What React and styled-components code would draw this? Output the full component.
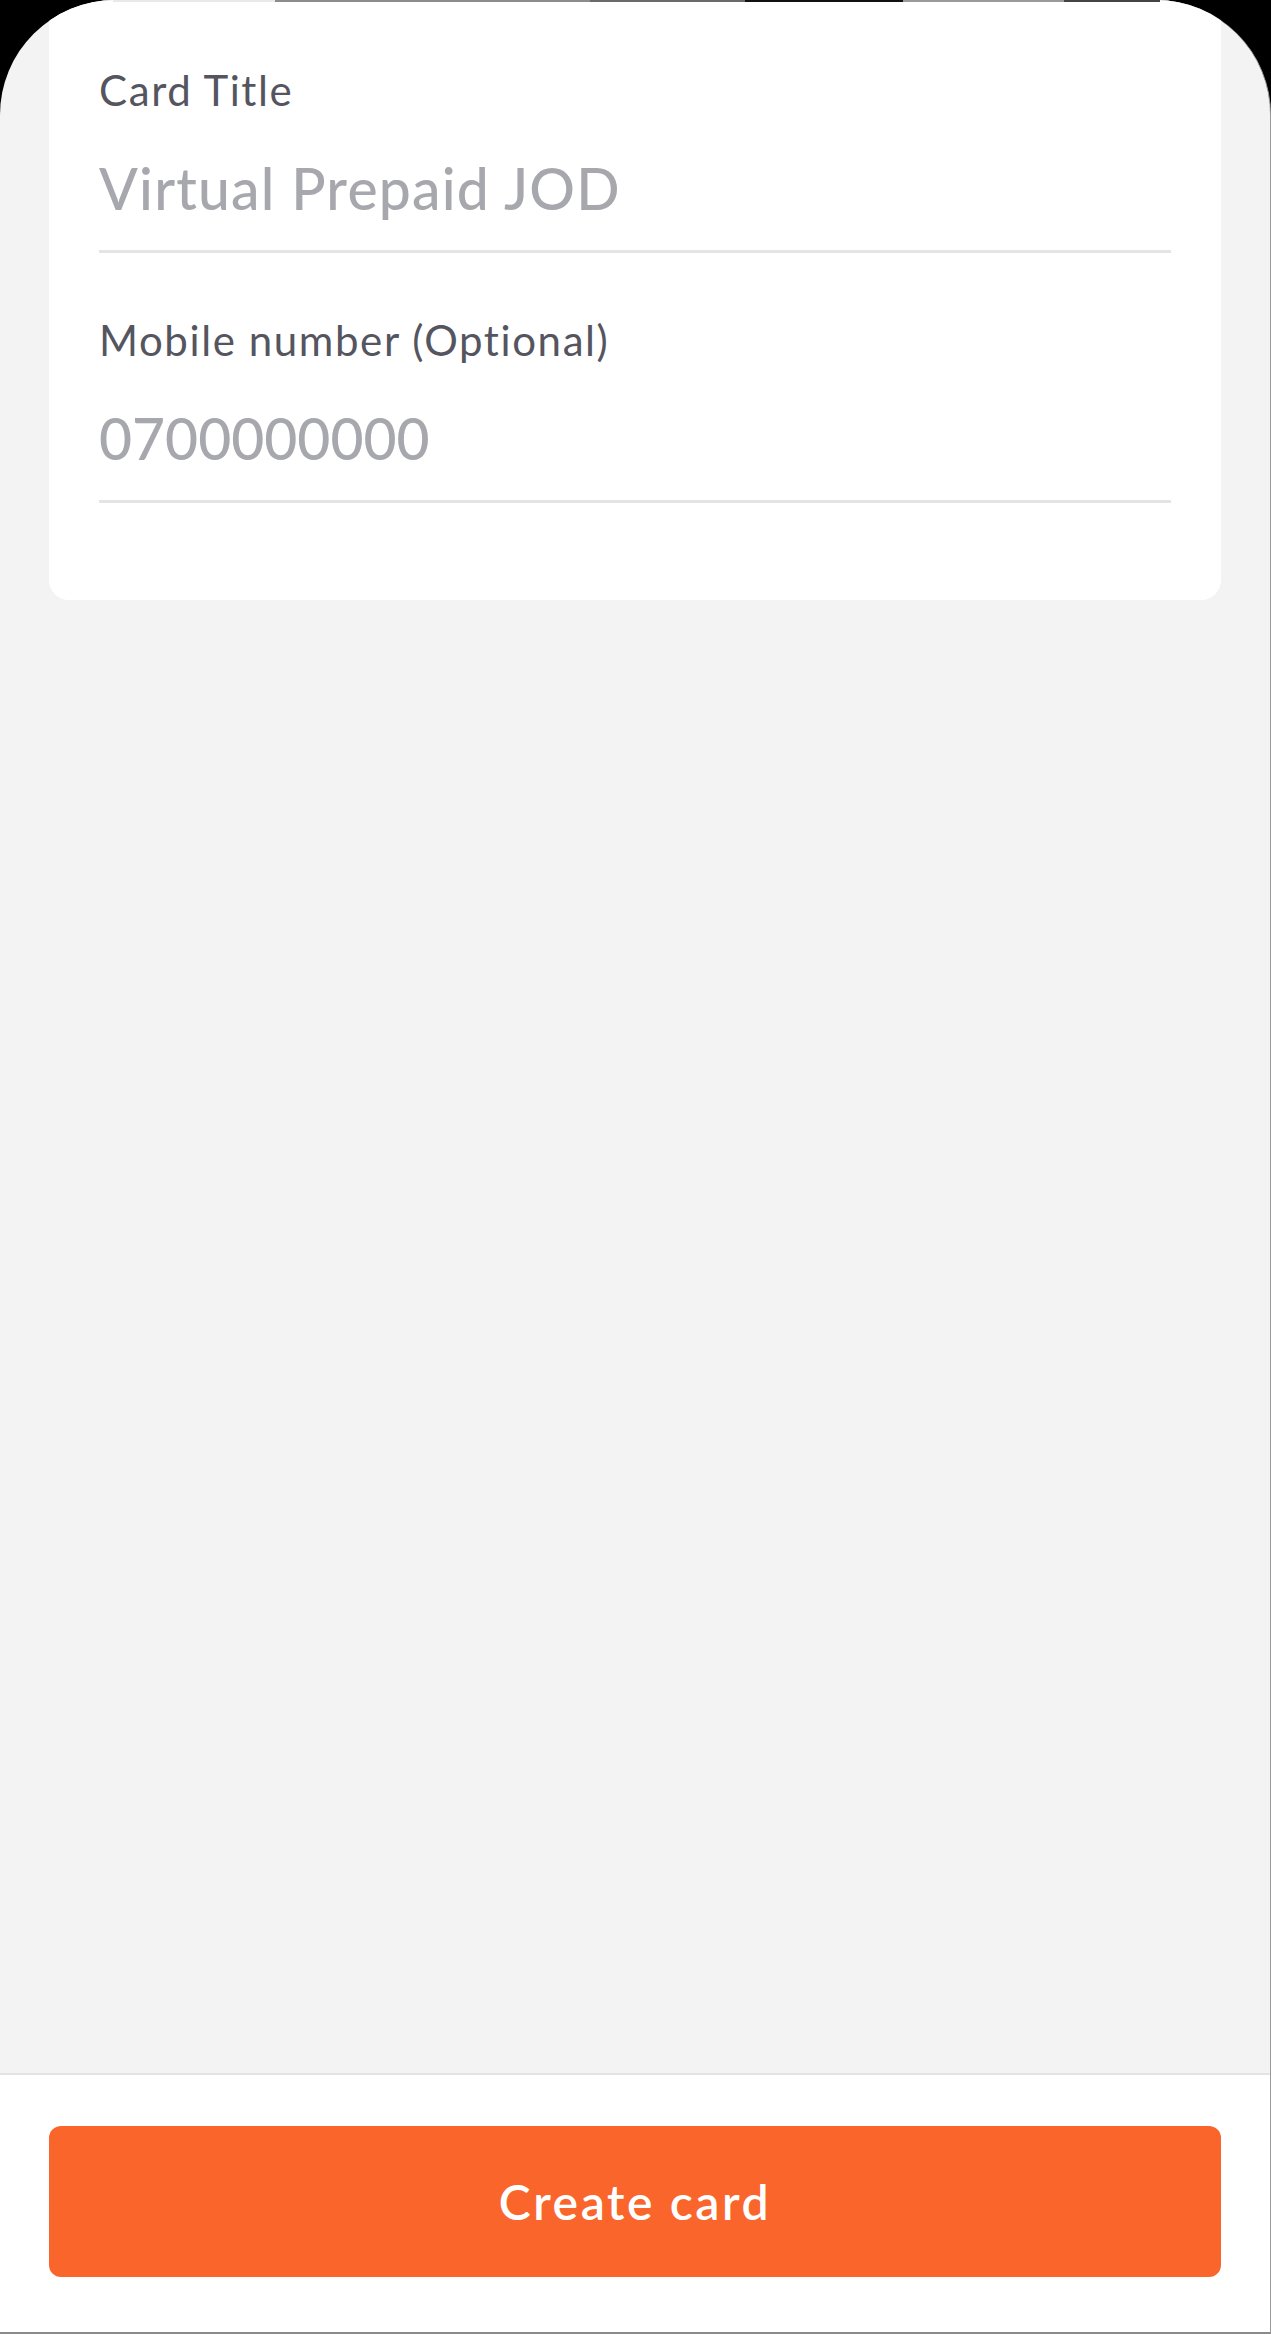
import React from 'react';
import styled, { createGlobalStyle } from 'styled-components';

const GlobalStyle = createGlobalStyle`
  html, body {
    margin: 0;
    padding: 0;
    background: #000;
  }
  * {
    box-sizing: border-box;
  }
`;

const Frame = styled.div`
  position: relative;
  width: 1271px;
  height: 2334px;
  background: #000;
  overflow: hidden;
`;

const Screen = styled.div`
  display: flex;
  flex-direction: column;
  width: 100%;
  height: 100%;
  background: #f3f3f3;
  border-radius: 115px 115px 0 0;
  border-right: 1px solid #9a9a9a;
  border-bottom: 2px solid #8a8a8a;
  overflow: hidden;
  font-family: Lato, 'Noto Sans', sans-serif;
  font-variant-ligatures: none;
`;

// thin strip of the device edge over the top of the screen
const TopEdge = styled.div`
  position: absolute;
  top: 0;
  left: 0;
  width: 100%;
  height: 2px;
  background: linear-gradient(
    to right,
    transparent 0 113px,
    #e9e9e9 113px 275px,
    #8c8c8c 275px 590px,
    #6a6a6a 590px 745px,
    #111 745px 903px,
    #9a9a9a 903px 1064px,
    #444 1064px 1160px,
    transparent 1160px
  );
`;

const Card = styled.section`
  margin: 0 49px;
  padding: 65px 50px 97px;
  background: #fff;
  border-radius: 0 0 20px 20px;
  display: flex;
  flex-direction: column;
  gap: 62px;
`;

const Field = styled.div`
  display: flex;
  flex-direction: column;
  border-bottom: 3px solid #e4e4e6;
  padding-bottom: 28px;
`;

const Label = styled.label`
  font-size: 42px;
  line-height: 50px;
  letter-spacing: 1.6px;
  color: #55555f;
  font-weight: 400;
`;

const Value = styled.div`
  margin-top: 39px;
  font-size: 57px;
  line-height: 68px;
  letter-spacing: ${({ $tracking }) => $tracking}px;
  color: #a7a7ae;
  font-weight: 500;
`;

const Spacer = styled.div`
  flex: 1;
`;

const Footer = styled.footer`
  background: #fff;
  border-top: 2px solid #e3e3e3;
  padding: 51px 49px 55px;
`;

const Button = styled.button`
  display: flex;
  align-items: center;
  justify-content: center;
  width: 100%;
  height: 151px;
  border: 0;
  border-radius: 12px;
  background: #f9652b;
  color: #fff;
  font-family: Lato, 'Noto Sans', sans-serif;
  font-size: 48px;
  font-weight: 600;
  letter-spacing: 2.6px;
`;

const fields = [
  { label: 'Card Title', value: 'Virtual Prepaid JOD', tracking: 1.2 },
  { label: 'Mobile number (Optional)', value: '0700000000', tracking: 0 },
];

const App = () => (
  <>
    <GlobalStyle />
    <Frame>
      <Screen>
        <Card>
          {fields.map((f) => (
            <Field key={f.label}>
              <Label>{f.label}</Label>
              <Value $tracking={f.tracking}>{f.value}</Value>
            </Field>
          ))}
        </Card>
        <Spacer />
        <Footer>
          <Button>Create card</Button>
        </Footer>
      </Screen>
      <TopEdge />
    </Frame>
  </>
);

export default App;
